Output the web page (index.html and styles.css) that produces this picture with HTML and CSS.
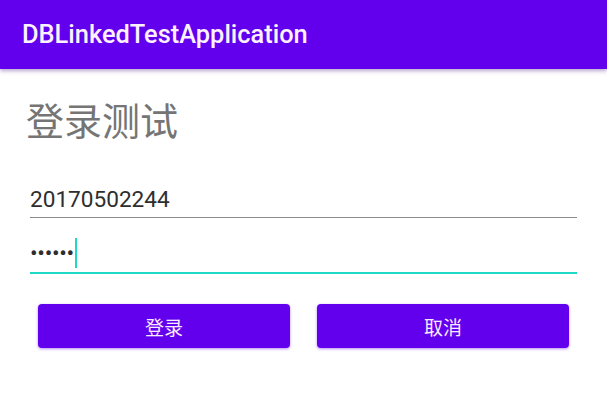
FILE: index.html
```html
<!DOCTYPE html>
<html lang="zh">
<head>
<meta charset="utf-8">
<title>DBLinkedTestApplication</title>
<link rel="stylesheet" href="styles.css">
</head>
<body>
<header class="appbar">DBLinkedTestApplication</header>
<main class="content">
  <h1 class="heading">登录测试</h1>
  <div class="form">
    <div class="field field-user">20170502244</div>
    <div class="field field-pass"><span class="dots">••••••</span><span class="caret"></span></div>
  </div>
  <div class="buttons">
    <button class="btn">登录</button>
    <button class="btn">取消</button>
  </div>
</main>
</body>
</html>
```
FILE: styles.css
```css
* { box-sizing: border-box; }
html, body { margin: 0; padding: 0; background: #ffffff; }
body { font-family: Roboto, "Noto Sans CJK SC", sans-serif; width: 607px; height: 401px; overflow: hidden; }

.appbar {
  height: 69px;
  background: #6200ee;
  color: #fdf0ff;
  font-family: Roboto, sans-serif;
  font-weight: 500;
  font-size: 25.4px;
  display: flex;
  align-items: center;
  padding-left: 22px;
  padding-bottom: 1px;
  box-shadow: 0 2px 4px rgba(60, 0, 120, 0.35);
  position: relative;
  z-index: 1;
}

.heading {
  margin: 31px 0 0 26px;
  font-family: "Noto Sans CJK SC", sans-serif;
  font-weight: 400;
  font-size: 38px;
  line-height: 38px;
  color: #757575;
}

.form {
  margin-top: 49px;
  padding: 0 30px;
}

.field {
  font-family: Roboto, sans-serif;
  font-size: 22.6px;
  line-height: 26px;
  color: #2e2e2e;
}

.field-user {
  padding-bottom: 4px;
  border-bottom: 1px solid #8c8c8c;
}

.field-pass {
  padding-top: 23px;
  padding-bottom: 5px;
  border-bottom: 2px solid #1fd8c6;
}

.dots {
  letter-spacing: -0.3px;
}

.caret {
  display: inline-block;
  width: 2px;
  height: 30px;
  margin: -3px 0 -3px 1px;
  vertical-align: -4px;
  background: #1fd8c6;
}

.buttons {
  display: flex;
  gap: 27px;
  padding: 0 38px;
  margin-top: 30px;
}

.btn {
  flex: 1;
  height: 44px;
  border: none;
  border-radius: 4px;
  background: #6200ee;
  color: #fbeaff;
  font-family: "Noto Sans CJK SC", sans-serif;
  font-size: 19px;
  box-shadow: 0 1px 3px rgba(98, 0, 238, 0.45);
  padding: 0;
}
```
